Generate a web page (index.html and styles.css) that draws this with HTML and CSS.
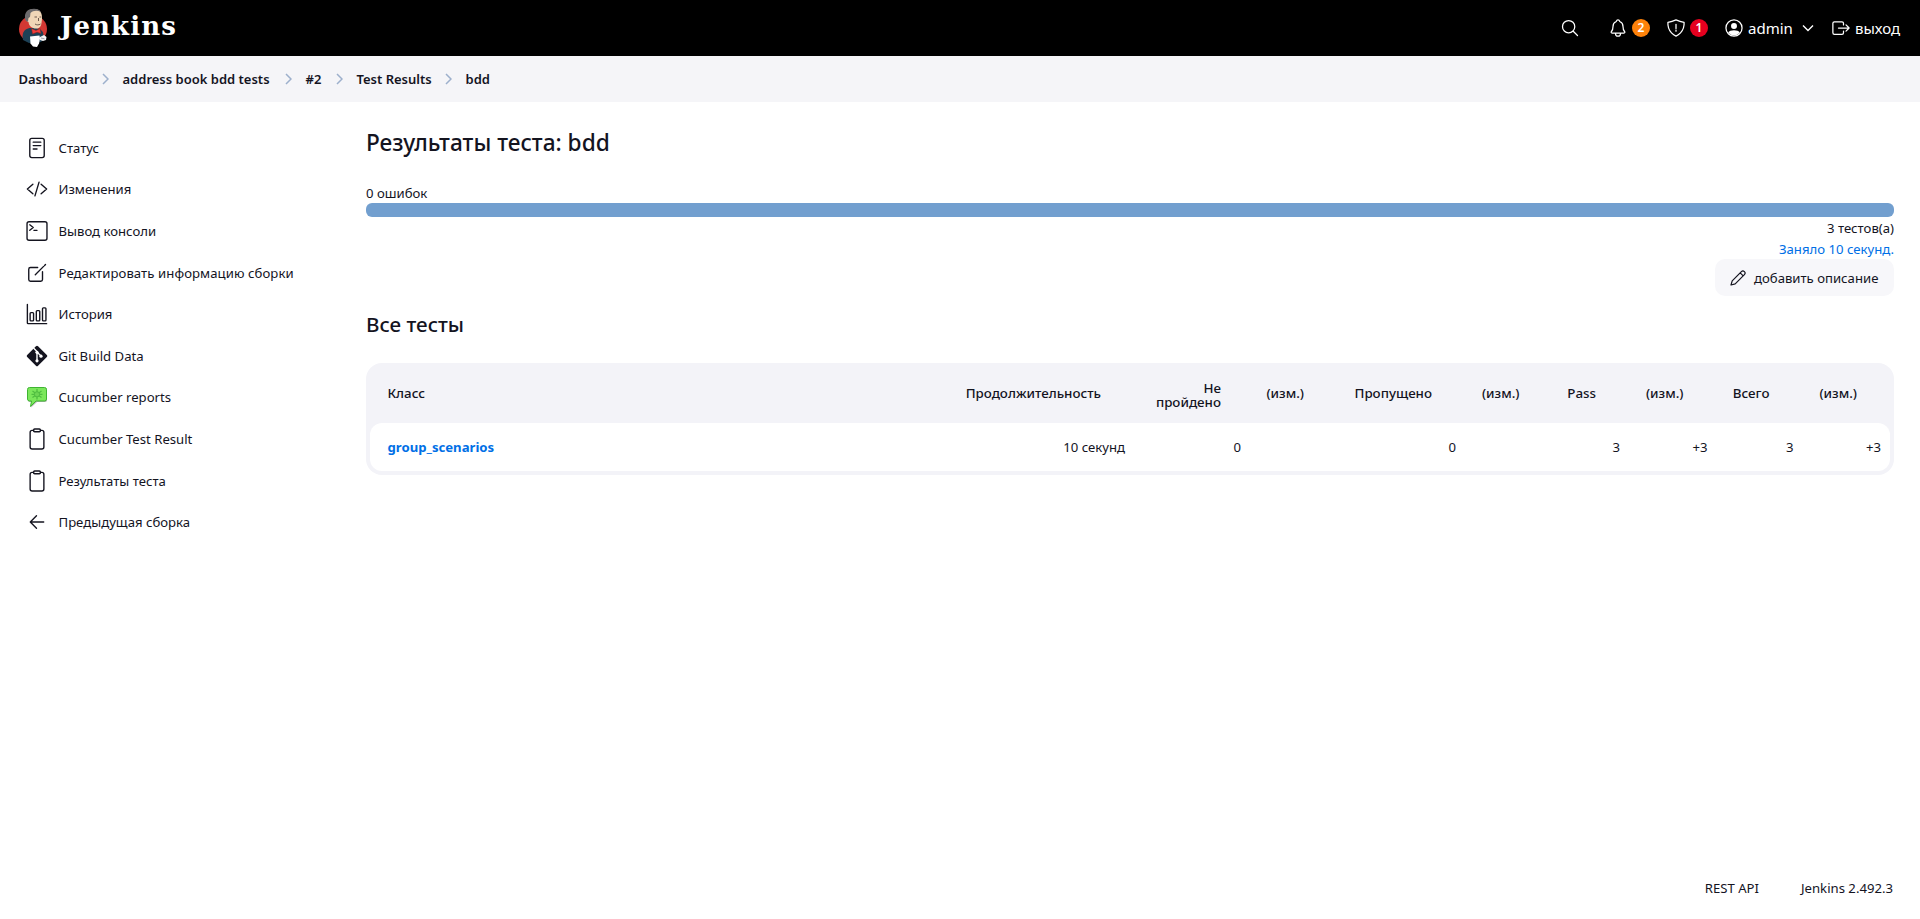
FILE: index.html
```html
<!DOCTYPE html>
<html lang="ru">
<head>
<meta charset="utf-8">
<title>Результаты теста: bdd [Jenkins]</title>
<link rel="stylesheet" href="styles.css">
</head>
<body>
<header class="header">
  <a class="brand">
    <svg class="butler" viewBox="0 0 28 40">
      <ellipse cx="14" cy="21" rx="14" ry="13.500" fill="#d33833"/>
      <path d="M3.500 28C4 22 8 20 12 20h5c5 1 7 3 7.500 7l.5 4-3 3-12 1-6-3z" fill="#1d4156"/>
      <path d="M7 9C7 3 11 1 15 1c6 0 8.500 4 8 10l-.5 4c-.5 4-2.500 5.500-5 5.500-5 0-7.500-2.500-8-6.500-3-1-3-4-2.500-5z" fill="#f0d6b7"/>
      <path d="M6 10C5.500 4 9 .8 15 .8c3 0 5.500 1 7 3.200-4-2-8-1.500-10.500 1L11 9l-1.500 1-.5 3.500C7 14 6 12 6 10z" fill="#6d6b6d"/>
      <path d="M15.500 9h2.500m2.500 0h1.800M16 16c2 1.200 3.500 1.200 5.500 0M19.500 10v3" stroke="#4b3a33" stroke-width=".8" fill="none"/>
      <path d="M12.500 20.500l4.500 2 4-2 1 5-4-1.200-4.500 1.700z" fill="#ef3d3a" stroke="#81211f" stroke-width=".5"/>
      <path d="M11 28.500l9.500-1 .5 3-1 5-2 3.500-4-.5-2.500-3z" fill="#fff"/>
      <path d="M21 29l4-2 2.500 2-.5 3-3 1-3-1z" fill="#f4f4f4"/>
      <path d="M22 30l3.500.8" stroke="#667" stroke-width=".6"/>
    </svg>
    <span class="brand-name">Jenkins</span>
  </a>
  <div class="tools">
    <svg class="icon tool-search" viewBox="0 0 512 512"><path d="M221 64a157 157 0 10157 157A157 157 0 00221 64zM338.300 338.300L448 448"/></svg>
    <svg class="icon tool-bell" viewBox="0 0 512 512"><path d="M427.680 351.430C402 320 383.870 304 383.870 217.350 383.870 138 343.350 109.730 310 96c-4.430-1.820-8.600-6-9.950-10.550C294.200 65.540 277.800 48 256 48s-38.210 17.550-44 37.470c-1.350 4.600-5.520 8.710-9.950 10.530-33.390 13.750-73.870 41.920-73.870 121.350C128.130 304 110 320 84.320 351.430 73.680 364.450 83 384 101.610 384h308.880c18.510 0 27.770-19.610 17.190-32.570zM320 384v16a64 64 0 01-128 0v-16"/></svg>
    <span class="badge badge-orange">2</span>
    <svg class="icon tool-shield" viewBox="0 0 512 512"><path d="M463.100 112.370C373.680 96.330 336.710 84.450 256 48c-80.710 36.450-117.680 48.330-207.100 64.370C32.700 369.130 240.580 457.790 256 464c15.420-6.210 223.300-94.870 207.100-351.630zM256 160v110M256 310v28"/></svg>
    <span class="badge badge-red">1</span>
    <svg class="icon tool-user" viewBox="0 0 512 512"><circle cx="256" cy="256" r="206"/><circle cx="256" cy="205" r="76" class="solid"/><path class="solid" d="M108 372c40-80 256-80 296 0-80 100-216 100-296 0z"/></svg>
    <span class="user-name">admin</span>
    <svg class="tool-chevron" viewBox="0 0 12 8"><path d="M1 1.500l5 5 5-5"/></svg>
    <svg class="icon tool-exit" viewBox="0 0 512 512"><path d="M320 176v-40a40 40 0 00-40-40H88a40 40 0 00-40 40v240a40 40 0 0040 40h192a40 40 0 0040-40v-40M384 176l80 80-80 80M191 256h273"/></svg>
    <span class="logout">выход</span>
  </div>
</header>
<nav class="crumbs">
  <span class="c-dash">Dashboard</span><svg viewBox="0 0 7 12"><path d="M1 1l5 5-5 5"/></svg>
  <span class="c-book">address book bdd tests</span><svg viewBox="0 0 7 12"><path d="M1 1l5 5-5 5"/></svg>
  <span class="c-num">#2</span><svg viewBox="0 0 7 12"><path d="M1 1l5 5-5 5"/></svg>
  <span class="c-res">Test Results</span><svg viewBox="0 0 7 12"><path d="M1 1l5 5-5 5"/></svg>
  <span class="c-bdd">bdd</span>
</nav>
<div class="page">
  <aside class="side">
    <a class="task"><svg class="icon" viewBox="0 0 512 512"><rect x="88" y="32" width="336" height="448" rx="48"/><path d="M168 120h176M168 200h176M168 280h88"/></svg><span>Статус</span></a>
    <a class="task"><svg class="icon" viewBox="0 0 512 512"><path d="M160 368L32 256l128-112M352 368l128-112-128-112M304 96l-96 320"/></svg><span>Изменения</span></a>
    <a class="task"><svg class="icon" viewBox="0 0 512 512"><rect x="24" y="40" width="464" height="432" rx="48"/><path d="M88 112l80 64-80 64M184 240h72"/></svg><span>Вывод консоли</span></a>
    <a class="task wide"><svg class="icon" viewBox="0 0 512 512"><path d="M384 224v184a40 40 0 01-40 40H104a40 40 0 01-40-40V168a40 40 0 0140-40h167.500M216 296L410 102M432 80l22-22"/></svg><span>Редактировать информацию сборки</span></a>
    <a class="task"><svg class="icon" viewBox="0 0 512 512"><path d="M32 32v432a16 16 0 0016 16h432"/><rect x="96" y="224" width="80" height="192" rx="20"/><rect x="240" y="176" width="80" height="240" rx="20"/><rect x="384" y="112" width="80" height="304" rx="20"/></svg><span>История</span></a>
    <a class="task"><svg class="picture" viewBox="0 0 22 22"><rect x="3.300" y="3.300" width="15.400" height="15.400" rx="1.500" transform="rotate(45 11 11)" fill="#14141f"/><path d="M7.500 3L11 6.500v9.500M11 7l4 4" stroke="#fff" stroke-width="1.400" fill="none"/><circle cx="11" cy="7.300" r="1.600" fill="#fff"/><circle cx="11" cy="15.800" r="1.600" fill="#fff"/><circle cx="15" cy="11.200" r="1.600" fill="#fff"/></svg><span>Git Build Data</span></a>
    <a class="task"><svg class="picture" viewBox="0 0 22 22"><path d="M4 2h15q2 0 2 2v10q0 2-2 2h-8l-6 5.500L6 16H4q-2 0-2-2V4q0-2 2-2z" fill="#777" opacity=".55"/><path d="M3.500 1.500h15q2 0 2 2v9.500q0 2-2 2H10l-5.500 5.500 1-5.500h-2q-2 0-2-2V3.500q0-2 2-2z" fill="#7be75b" stroke="#3fb432"/><path d="M11 3v10.500M6.500 5l9 6.500M15.500 5l-9 6.500M5.500 8.300h11" stroke="#4fbd40" stroke-width="1.300"/><circle cx="11" cy="8.300" r="2.600" fill="#6cd553" stroke="#4fbd40"/></svg><span>Cucumber reports</span></a>
    <a class="task"><svg class="icon" viewBox="0 0 512 512"><path d="M336 56h32a48 48 0 0148 48v336a48 48 0 01-48 48H144a48 48 0 01-48-48V104a48 48 0 0148-48h32"/><rect x="176" y="24" width="160" height="64" rx="26"/></svg><span>Cucumber Test Result</span></a>
    <a class="task"><svg class="icon" viewBox="0 0 512 512"><path d="M336 56h32a48 48 0 0148 48v336a48 48 0 01-48 48H144a48 48 0 01-48-48V104a48 48 0 0148-48h32"/><rect x="176" y="24" width="160" height="64" rx="26"/></svg><span>Результаты теста</span></a>
    <a class="task"><svg class="icon" viewBox="0 0 512 512"><path d="M244 400L100 256l144-144M120 256h292"/></svg><span>Предыдущая сборка</span></a>
  </aside>
  <main class="main">
    <h1>Результаты теста: bdd</h1>
    <div class="failures">0 ошибок</div>
    <div class="bar"></div>
    <div class="total">3 тестов(а)</div>
    <a class="took">Заняло 10 секунд.</a>
    <a class="describe">
      <svg viewBox="0 0 16 16"><path d="M1 15l1.200-4.200L11.400 1.600a2 2 0 013 3L5.200 13.800zM10.200 2.800l3 3"/></svg>
      <span>добавить описание</span>
    </a>
    <h2>Все тесты</h2>
    <div class="frame">
      <table class="results">
        <colgroup><col class="w-class"><col class="w-time"><col class="w-fail"><col class="w-fd"><col class="w-skip"><col class="w-diff"><col class="w-pass"><col class="w-diff"><col class="w-total"><col class="w-diff"></colgroup>
        <thead><tr><th>Класс</th><th>Продолжительность</th><th class="wrap">Не пройдено</th><th>(изм.)</th><th>Пропущено</th><th>(изм.)</th><th>Pass</th><th>(изм.)</th><th>Всего</th><th>(изм.)</th></tr></thead>
        <tbody><tr><td><a>group_scenarios</a></td><td>10 секунд</td><td>0</td><td></td><td>0</td><td></td><td>3</td><td>+3</td><td>3</td><td>+3</td></tr></tbody>
      </table>
    </div>
  </main>
</div>
<footer class="footer"><a class="f-api">REST API</a><a class="f-ver">Jenkins 2.492.3</a></footer>
</body>
</html>
```
FILE: styles.css
```css
* { box-sizing: border-box; }
body {
  margin: 0;
  height: 919px;
  display: flex;
  flex-direction: column;
  background: #fff;
  color: #14141f;
  font: 13.15px/20px "Noto Sans", "Open Sans", sans-serif;
  white-space: nowrap;
}
svg { display: block; flex: none; }
.icon, .picture { width: 22px; height: 22px; overflow: visible; }
.icon * {
  fill: none;
  stroke: currentColor;
  stroke-width: 32;
  stroke-linecap: round;
  stroke-linejoin: round;
}
.icon .solid { fill: currentColor; stroke: none; }

.header {
  height: 56px;
  flex: none;
  display: flex;
  justify-content: space-between;
  background: #000;
  color: #fff;
  font-size: 15px;
}
.brand { display: flex; padding: 8px 0 0 19px; gap: 13px; }
.butler { width: 28px; height: 40px; }
.brand-name { font: bold 26px/37px "DejaVu Serif", serif; letter-spacing: 1.1px; }
.tools { display: flex; align-items: center; padding-right: 19px; }
.tools .icon { width: 20px; height: 20px; }
.tool-search { margin-right: 28px; }
.tool-bell { margin-right: 4px; }
.tool-shield { margin: 0 4px 0 16px; }
.tool-user { margin: 0 4px 0 16px; }
.badge {
  width: 18px;
  height: 18px;
  border-radius: 50%;
  font: 600 12px/18px "Noto Sans", sans-serif;
  text-align: center;
}
.badge-orange { background: #fe820a; }
.badge-red { background: #e6001f; }
.user-name { width: 45px; }
.tool-chevron { width: 12px; height: 8px; margin: 0 17px 0 9px; }
.tool-chevron path { fill: none; stroke: #fff; stroke-width: 1.4; }
.logout { width: 46px; margin-left: 4px; }

.crumbs {
  height: 46px;
  flex: none;
  display: flex;
  align-items: center;
  padding-left: 18.5px;
  background: #f5f5f8;
  font-size: 13px;
  font-weight: 600;
}
.crumbs svg { width: 7px; height: 12px; margin: 0 14px; }
.crumbs path { fill: none; stroke: #9db0cc; stroke-width: 1.5; }
.c-dash { width: 69px; }
.c-book { width: 148px; }
.c-num { width: 16px; }
.c-res { width: 74px; }

.page { flex: 1; display: flex; }
.side { width: 366px; padding: 25px 0 0 26px; }
.task { display: flex; align-items: center; gap: 10.5px; height: 41.6px; }
.task.wide { letter-spacing: 0.07px; }

.main { width: 1528px; display: flex; flex-direction: column; }
h1 { margin: 25px 0 0; font-size: 22.7px; line-height: 32px; font-weight: 500; }
.failures { margin-top: 24px; }
.bar { height: 14px; border-radius: 6px; background: #729fcf; }
.total { align-self: flex-end; margin-top: 1px; line-height: 21px; }
.took { align-self: flex-end; line-height: 20px; color: #006fe6; }
.describe {
  align-self: flex-end;
  width: 179px;
  height: 37px;
  display: flex;
  align-items: center;
  gap: 8px;
  padding-left: 15px;
  border-radius: 10px;
  background: #f7f7fa;
}
.describe svg { width: 16px; height: 16px; }
.describe path { fill: none; stroke: #14141f; stroke-width: 1.2; stroke-linejoin: round; }
h2 { margin: 13px 0 0; font-size: 20.6px; line-height: 30px; font-weight: 500; }

.frame {
  margin-top: 24px;
  height: 112px;
  padding: 0 4px 4px;
  border-radius: 16px;
  background: #f3f3f8;
}
.results { width: 1520px; table-layout: fixed; border-spacing: 0; }
.w-class { width: 580px; }
.w-time { width: 184px; }
.w-fail { width: 116px; }
.w-fd { width: 87px; }
.w-skip { width: 128px; }
.w-diff { width: 87.5px; }
.w-pass { width: 76.5px; }
.w-total { width: 86px; }
th {
  height: 60px;
  padding: 0 33px 0 0;
  font-size: 13.35px;
  font-weight: 500;
  line-height: 14px;
  text-align: right;
}
th.wrap { padding: 3px 29px 0 20px; white-space: normal; }
td { height: 48px; padding: 0 9px 0 0; background: #fff; text-align: right; }
th:first-child, td:first-child { padding: 0 0 0 17.5px; text-align: left; }
td:first-child { border-radius: 12px 0 0 12px; }
td:last-child { border-radius: 0 12px 12px 0; }
td a { color: #006fe6; font-weight: 700; }

.footer {
  height: 62px;
  flex: none;
  display: flex;
  justify-content: flex-end;
  align-items: center;
  gap: 42px;
  padding-right: 27px;
}
```
